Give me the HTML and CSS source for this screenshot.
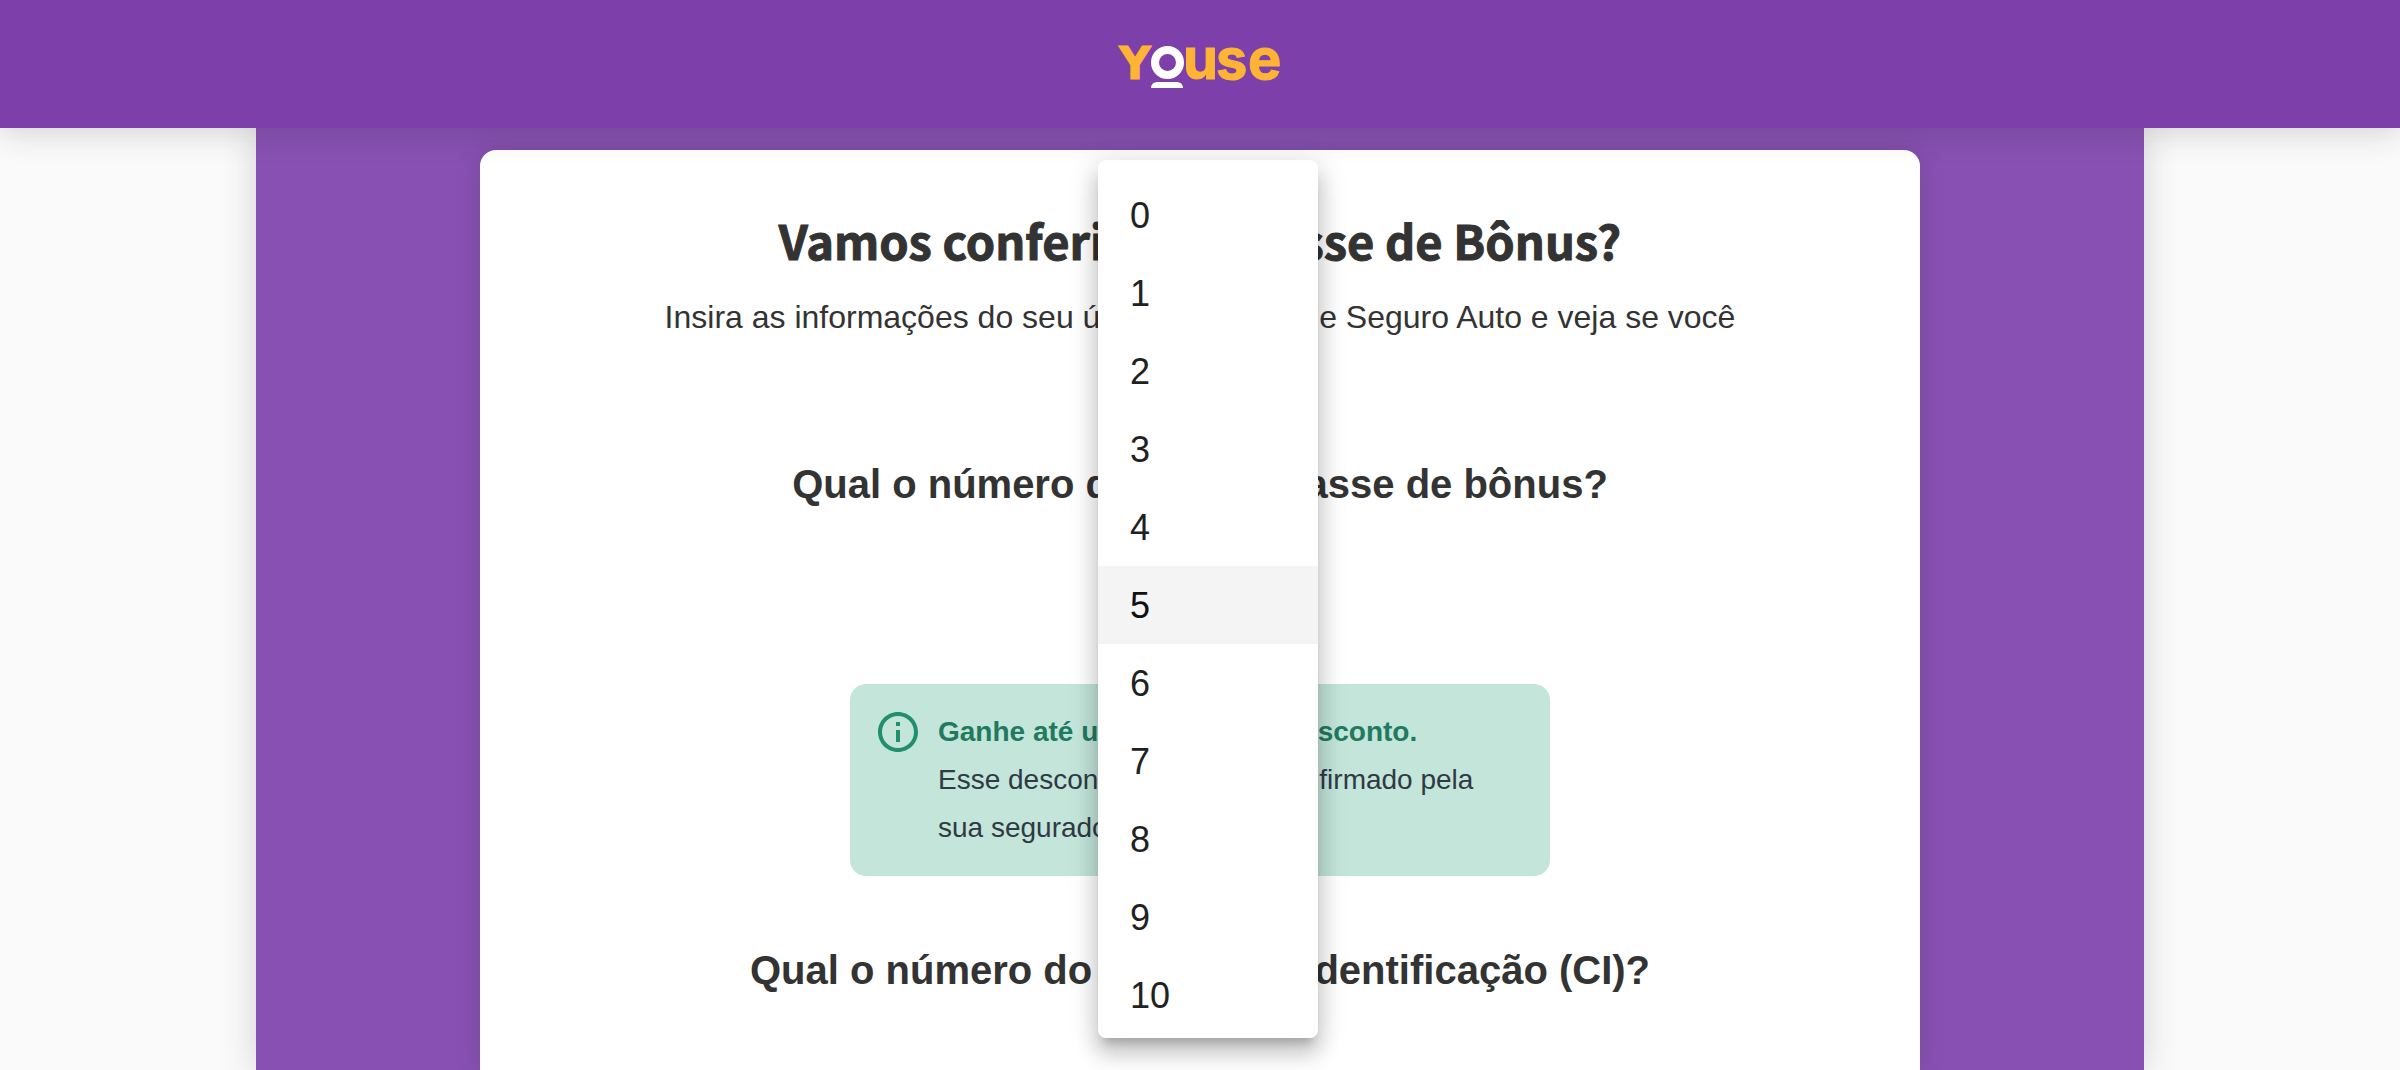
FILE: index.html
```html
<!DOCTYPE html>
<html lang="pt-BR">
<head>
<meta charset="utf-8">
<meta name="viewport" content="width=device-width, initial-scale=1">
<title>Youse - Classe de Bônus</title>
<link rel="stylesheet" href="styles.css">
</head>
<body>
<header class="topbar">
  <svg class="logo" viewBox="0 0 164 44" role="img" aria-label="Youse">
    <g class="logo-letters">
      <text class="logo-cap" x="1" y="35">Y</text>
      <text x="65" y="35">u</text>
      <text x="98" y="35">s</text>
      <text x="130" y="35">e</text>
    </g>
    <ellipse class="logo-ring" cx="49.500" cy="18.500" rx="12.500" ry="12.500"/>
    <path class="logo-base" d="M33 44C33 40 36 38 40 38H58C62 38 65 40 65 44Z"/>
  </svg>
</header>
<main class="panel">
  <section class="card">
    <h1 class="title">Vamos conferir sua Classe de Bônus?</h1>
    <p class="lead">Insira as informações do seu último contrato de Seguro Auto e veja se você</p>
    <form class="form">
      <div class="field">
        <label class="question" for="bonus">Qual o número da última classe de bônus?</label>
        <select class="menu" id="bonus" size="11">
          <option>0</option>
          <option>1</option>
          <option>2</option>
          <option>3</option>
          <option>4</option>
          <option selected>5</option>
          <option>6</option>
          <option>7</option>
          <option>8</option>
          <option>9</option>
          <option>10</option>
        </select>
      </div>
      <aside class="notice">
        <svg class="notice-icon" viewBox="0 0 24 24" aria-hidden="true"><path d="M11 7h2v2h-2zm0 4h2v6h-2zm1-9C6.480 2 2 6.480 2 12s4.480 10 10 10 10-4.480 10-10S17.520 2 12 2zm0 18c-4.410 0-8-3.590-8-8s3.590-8 8-8 8 3.590 8 8-3.590 8-8 8z"/></svg>
        <div class="notice-text">
          <strong class="notice-title">Ganhe até um máximo de desconto.</strong>
          <p class="notice-body">Esse desconto precisa ser confirmado pela sua seguradora.</p>
        </div>
      </aside>
      <h2 class="question">Qual o número do código de Identificação (CI)?</h2>
    </form>
  </section>
</main>
</body>
</html>
```
FILE: styles.css
```css
* {
  box-sizing: border-box;
}

body {
  margin: 0;
  height: 100vh;
  display: flex;
  flex-direction: column;
  overflow: hidden;
  background: #fafafa;
  color: #333;
  font-family: "Liberation Sans", Arial, sans-serif;
}

.topbar {
  position: relative;
  z-index: 1;
  flex: none;
  display: flex;
  justify-content: center;
  padding: 44px 0 40px;
  background: #7d40ab;
  box-shadow: 0 4px 30px rgba(51, 51, 51, 0.2);
}

.logo {
  width: 164px;
  height: 44px;
  overflow: visible;
}

.logo-letters {
  fill: #ffb435;
  stroke: #ffb435;
  stroke-width: 1;
  font: 700 56px Inter, sans-serif;
}

.logo-cap {
  font: 700 44px "DejaVu Sans", sans-serif;
}

.logo-ring {
  fill: none;
  stroke: #fff;
  stroke-width: 8;
}

.logo-base {
  fill: #fff;
}

.panel {
  flex: 1 0 auto;
  width: 100%;
  max-width: 1888px;
  margin: 0 auto;
  padding: 22px 224px 0;
  display: flex;
  background: #8850b3;
  box-shadow: 0 0 32px rgba(51, 51, 51, 0.2);
}

.card {
  flex: 1;
  padding: 58px 80px 0;
  border-radius: 16px 16px 0 0;
  background: #fff;
  box-shadow: 0 0 24px rgba(51, 51, 51, 0.2);
  text-align: center;
}

.title {
  margin: 0;
  font: 700 47px/64px "Noto Sans CJK SC", "Noto Sans", sans-serif;
  -webkit-text-stroke: 1px #333;
}

.lead {
  margin: 21px 0 0;
  font-size: 32px;
  line-height: 48px;
}

.form {
  display: flex;
  flex-direction: column;
  align-items: center;
  margin-top: 117px;
}

.field {
  position: relative;
  width: 100%;
  height: 226px;
}

.question {
  display: block;
  margin: 0;
  font-size: 40px;
  font-weight: 700;
  line-height: 52px;
}

.menu {
  position: absolute;
  top: -298px;
  left: calc(50% - 102px);
  width: 220px;
  height: 878px;
  padding: 16px 0 4px;
  border: 0;
  border-radius: 8px;
  outline: 0;
  overflow: hidden;
  background: #fff;
  box-shadow: 0 10px 10px -6px rgba(0, 0, 0, 0.2), 0 16px 20px 2px rgba(0, 0, 0, 0.14), 0 6px 28px 4px rgba(0, 0, 0, 0.12);
  color: #212121;
  font: 36px/78px "Liberation Sans", Arial, sans-serif;
}

.menu option {
  height: 78px;
  min-height: 78px;
  padding: 19px 32px 0;
}

.menu option:checked {
  background: linear-gradient(#f4f4f4, #f4f4f4);
}

.notice {
  display: flex;
  gap: 16px;
  width: 700px;
  padding: 24px 40px 24px 24px;
  border-radius: 16px;
  background: #c3e5da;
  text-align: left;
}

.notice-icon {
  flex: none;
  width: 48px;
  height: 48px;
  fill: #218f6e;
}

.notice-text {
  font-size: 28px;
  line-height: 48px;
}

.notice-title {
  display: block;
  color: #1f7a5f;
}

.notice-body {
  margin: 0;
  color: #2f3a45;
}

.notice + .question {
  margin-top: 68px;
}
```
